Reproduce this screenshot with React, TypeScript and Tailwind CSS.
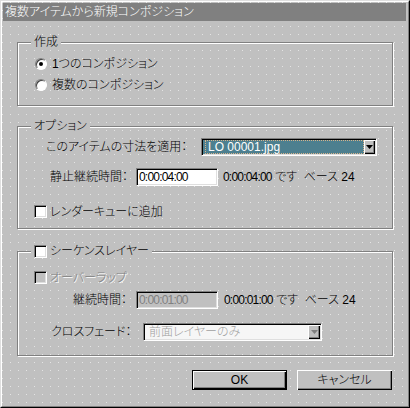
import type { ReactNode } from "react"

// classic win32 bevels
const sunken =
    "border border-t-[#808080] border-l-[#808080] border-r-white border-b-white shadow-[inset_1px_1px_0_#000,inset_-1px_-1px_0_#dfdfdf]"
const raised = "shadow-[inset_1px_1px_0_#fff,inset_-1px_-1px_0_#000,inset_-2px_-2px_0_#808080]"
const dots =
    "bg-[#c0c0c0] bg-[radial-gradient(circle_at_1.5px_1.5px,#e4e4e4_0.9px,transparent_0.9px)] bg-size-[8px_8px]"
const num = "tracking-[-0.8px]"
const greyed = "text-[#808080] [text-shadow:1px_1px_0_#fff]"

function Group({ legend, className, children }: { legend: ReactNode; className?: string; children: ReactNode }) {
    return (
        <div
            className={`relative ml-[15px] w-[376px] border border-[#808080] shadow-[inset_1px_1px_0_#fff,1px_1px_0_#fff] ${className ?? ""}`}
        >
            <div className="absolute left-[13px] -top-[8px] flex h-[14px] items-center gap-[3px] bg-[#c0c0c0] px-[3px]">
                {legend}
            </div>
            {children}
        </div>
    )
}

function Radio({ checked, label }: { checked?: boolean; label: string }) {
    return (
        <div className="flex h-[16px] items-center gap-[5px]">
            <span className="flex h-[12px] w-[12px] items-center justify-center rounded-full border border-t-[#808080] border-l-[#808080] border-r-white border-b-white bg-white shadow-[inset_1px_1px_0_#404040]">
                {checked && <span className="h-[4px] w-[4px] rounded-full bg-black" />}
            </span>
            <span>{label}</span>
        </div>
    )
}

function Check({ disabled }: { disabled?: boolean }) {
    return <span className={`block h-[13px] w-[13px] shrink-0 ${sunken} ${disabled ? "bg-[#c0c0c0]" : "bg-white"}`} />
}

function Arrow({ disabled, w }: { disabled?: boolean; w: string }) {
    return (
        <span className={`flex h-full ${w} shrink-0 items-center justify-center bg-[#c0c0c0] ${raised}`}>
            <svg width="7" height="4" viewBox="0 0 7 4">
                <path d="M0 0h7L3.5 4z" fill={disabled ? "#808080" : "#000"} />
            </svg>
        </span>
    )
}

export default function App() {
    return (
        <div
            className={`h-[408px] w-[410px] border border-t-[#dfdfdf] border-l-[#dfdfdf] border-r-black border-b-black ${dots} font-['Liberation_Sans','Noto_Sans_CJK_JP',sans-serif] text-[12px] font-light leading-none text-black [font-feature-settings:'palt']`}
        >
            <div className="flex h-full flex-col border border-t-white border-l-white border-r-[#808080] border-b-[#808080]">
                <div className="mt-px ml-px mr-[2px] flex h-[18px] items-center bg-[#808080] pl-[2px] text-white">
                    複数アイテムから新規コンポジション
                </div>

                <Group legend="作成" className="mt-[21px] h-[64px]">
                    <div className="flex flex-col gap-[5px] pl-[17px] pt-[13px]">
                        <Radio checked label="1つのコンポジション" />
                        <Radio label="複数のコンポジション" />
                    </div>
                </Group>

                <Group legend="オプション" className="mt-[20px] h-[103px]">
                    <div className="flex flex-col pt-[11px]">
                        <div className="flex h-[18px] items-center pl-[28px]">
                            <span className="w-[155px] whitespace-nowrap">このアイテムの寸法を適用：</span>
                            <div className={`flex h-[18px] w-[176px] bg-white ${sunken} p-px`}>
                                <div className="flex flex-1 items-center bg-[#4d7f8f] pl-[2px]">
                                    <span className="flex h-full flex-1 items-center border border-dotted border-[#d8b48c] pl-[2px] text-white">
                                        LO 00001.jpg
                                    </span>
                                </div>
                                <Arrow w="w-[11px]" />
                            </div>
                        </div>
                        <div className="mt-[12px] flex h-[18px] items-center pl-[32px]">
                            <span className="w-[86px] whitespace-nowrap">静止継続時間：</span>
                            <div className={`flex h-[18px] w-[82px] items-center bg-white pl-[2px] ${sunken} ${num}`}>0:00:04:00</div>
                            <span className="ml-[5px] whitespace-pre">
                                <span className={num}>0:00:04:00</span> です{"  "}ベース 24
                            </span>
                        </div>
                        <div className="mt-[19px] flex h-[13px] items-center gap-[3px] pl-[16px]">
                            <Check />
                            <span>レンダーキューに追加</span>
                        </div>
                    </div>
                </Group>

                <Group
                    legend={
                        <>
                            <Check />
                            <span>シーケンスレイヤー</span>
                        </>
                    }
                    className="mt-[22px] h-[105px]"
                >
                    <div className="flex flex-col pt-[19px]">
                        <div className="flex h-[13px] items-center gap-[3px] pl-[16px]">
                            <Check disabled />
                            <span className={greyed}>オーバーラップ</span>
                        </div>
                        <div className="mt-[7px] flex h-[18px] items-center pl-[55px]">
                            <span className="w-[63px] whitespace-nowrap">継続時間：</span>
                            <div className={`flex h-[18px] w-[82px] items-center bg-[#c0c0c0] pl-[2px] text-[#808080] ${sunken} ${num}`}>
                                0:00:01:00
                            </div>
                            <span className="ml-[6px] whitespace-pre">
                                <span className={num}>0:00:01:00</span> です{"  "}ベース 24
                            </span>
                        </div>
                        <div className="mt-[14px] flex h-[18px] items-center pl-[33px]">
                            <span className="w-[92px] whitespace-nowrap">クロスフェード：</span>
                            <div className={`flex h-[18px] w-[179px] bg-[#f6f6f6] ${sunken}`}>
                                <span className="flex flex-1 items-center pl-[5px] text-[#a0a0a0]">前面レイヤーのみ</span>
                                <span className="p-px">
                                    <Arrow disabled w="w-[12px]" />
                                </span>
                            </div>
                        </div>
                    </div>
                </Group>

                <div className="mt-[14px] ml-[190px] flex gap-[10px]">
                    <button className={`flex h-[20px] w-[95px] items-center justify-center border border-black bg-[#c0c0c0] ${raised}`}>
                        OK
                    </button>
                    <button className={`flex h-[20px] w-[95px] items-center justify-center bg-[#c0c0c0] ${raised}`}>
                        キャンセル
                    </button>
                </div>
            </div>
        </div>
    )
}
